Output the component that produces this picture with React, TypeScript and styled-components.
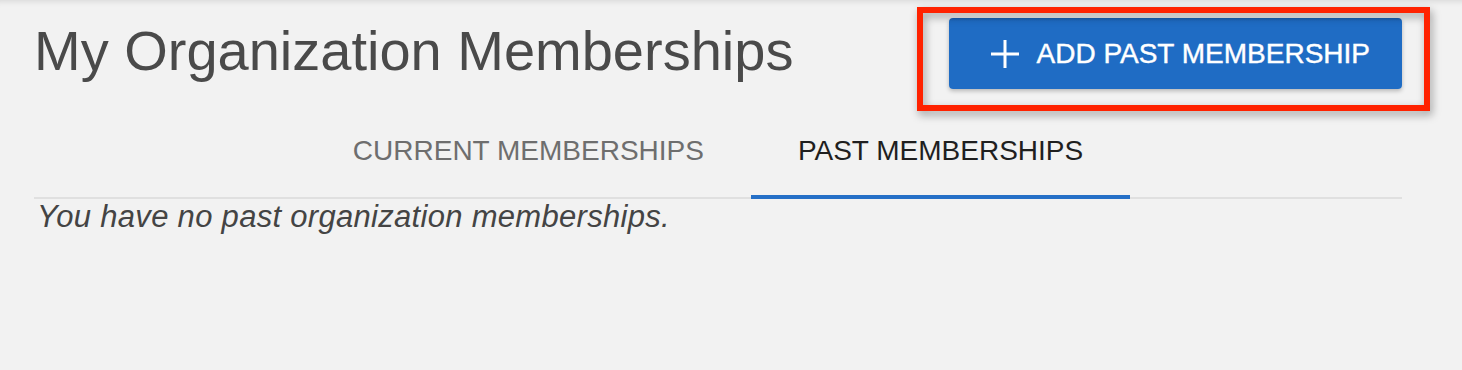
import styled, { createGlobalStyle } from 'styled-components'

const GlobalStyle = createGlobalStyle`
    html, body {
        margin: 0;
        background: #f2f2f2;
        font-family: "Liberation Sans", Arial, Helvetica, sans-serif;
    }
`

export default function App() {
    return (
        <Page>
            <GlobalStyle />
            <Header>
                <Title>My Organization Memberships</Title>
                <ButtonWrap>
                    <AddButton>
                        <PlusIcon />
                        ADD PAST MEMBERSHIP
                    </AddButton>
                    <Highlight />
                </ButtonWrap>
            </Header>
            <TabList>
                <Tab>CURRENT MEMBERSHIPS</Tab>
                <Tab active>PAST MEMBERSHIPS</Tab>
            </TabList>
            <Empty>You have no past organization memberships.</Empty>
        </Page>
    )
}

function PlusIcon() {
    return (
        <svg width="28" height="28" viewBox="0 0 28 28" fill="none">
            <path d="M14 0v28M0 14h28" stroke="#fff" strokeWidth="3" />
        </svg>
    )
}

const Page = styled.div`
    min-height: 370px;
    box-sizing: border-box;
    padding: 0 60px 0 34px;
    box-shadow: inset 0 7px 6px -6px rgba(0, 0, 0, 0.12);
`

const Header = styled.div`
    display: flex;
    justify-content: space-between;
    align-items: flex-start;
    padding-top: 18px;
`

const Title = styled.h1`
    margin: 1px 0 0;
    font-size: 56px;
    line-height: 64px;
    font-weight: 400;
    color: #4a4a4a;
`

const ButtonWrap = styled.div`
    position: relative;
`

const AddButton = styled.button`
    display: flex;
    align-items: center;
    gap: 18px;
    height: 71px;
    padding: 0 32px 0 42px;
    border: none;
    border-radius: 4px;
    background: linear-gradient(#1b5eb0 0, #1f6cc4 3px);
    box-shadow: 0 2px 4px rgba(0, 0, 0, 0.25);
    color: #fff;
    font-family: inherit;
    font-size: 28px;
    -webkit-text-stroke: 0.4px #fff;
    cursor: pointer;
`

const Highlight = styled.div`
    position: absolute;
    top: -11px;
    left: -32px;
    right: -28px;
    bottom: -22px;
    border: 6px solid #ff2200;
    filter: drop-shadow(2px 4px 4px rgba(0, 0, 0, 0.35));
    pointer-events: none;
`

const TabList = styled.div`
    display: flex;
    justify-content: center;
    margin-top: 18px;
    box-shadow: inset 0 -2px 0 #e0e0e0;
`

const Tab = styled.div<{ active?: boolean }>`
    padding: 28px 47px;
    font-size: 28px;
    line-height: 32px;
    color: ${({ active }) => (active ? '#1f1f1f' : '#6e6e6e')};
    border-bottom: 4px solid ${({ active }) => (active ? '#2570c7' : 'transparent')};
`

const Empty = styled.p`
    margin: 0;
    padding-left: 3px;
    font-size: 31px;
    font-style: italic;
    letter-spacing: 0.3px;
    color: #444;
`
